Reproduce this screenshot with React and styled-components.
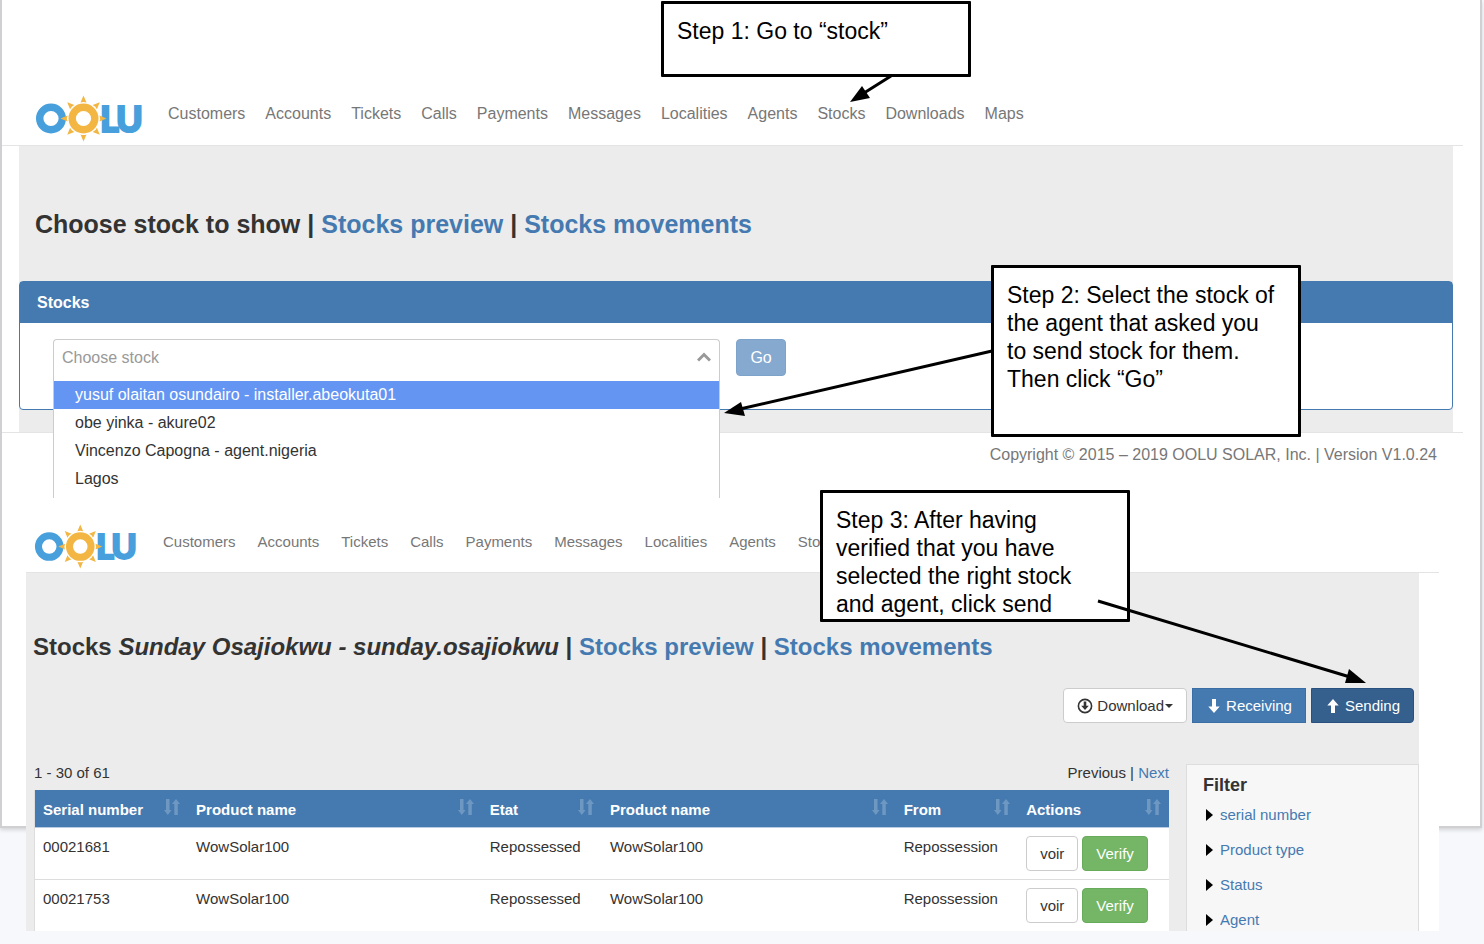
import React,{useState} from 'react';
import styled,{createGlobalStyle,css} from 'styled-components';

const GlobalStyle=createGlobalStyle`
*
{
    box-sizing:border-box;
}
body
{
    margin:0;
    background:#f7f8fb;
    color:#333;
    font-family:"Liberation Sans",Arial,sans-serif;
    font-size:15px;
    line-height:21px;
}
a
{
    color:#457ab1;
    text-decoration:none;
}
button,input
{
    font-family:inherit;
}
`;

const agentLinks=['Customers','Accounts','Tickets','Calls','Payments','Messages','Localities','Agents','Stocks'];
const links=[...agentLinks,'Downloads','Maps'];
const stocks=['yusuf olaitan osundairo - installer.abeokuta01','obe yinka - akure02','Vincenzo Capogna - agent.nigeria','Lagos'];
const columns=['Serial number','Product name','Etat','Product name','From','Actions'];
const rows=[
    {serial:'00021681',product:'WowSolar100',etat:'Repossessed',from:'Repossession'},
    {serial:'00021753',product:'WowSolar100',etat:'Repossessed',from:'Repossession'},
];
const filters=['serial number','Product type','Status','Agent'];
const rays=[0,45,90,135,180,225,270,315];

function Logo({small})
{
    return (
        <LogoSvg $small={small} viewBox="0 0 107 44" role="img" aria-label="OOLU">
            <circle cx="15" cy="21.5" r="11.3" fill="none" stroke="#479fdc" strokeWidth="7.4" />
            <LogoText x="64" y="35">L</LogoText>
            <LogoText x="80" y="35">U</LogoText>
            <circle cx="47.5" cy="21.5" r="16" fill="#fff" />
            <circle cx="47.5" cy="21.5" r="11.3" fill="none" stroke="#f3b643" strokeWidth="7.4" />
            {rays.map(angle=>(
                <path key={angle} d="M47.5 -1.5 L50.5 5.5 Q47.5 4.3 44.5 5.5 Z" fill="#f3b643" transform={`rotate(${angle} 47.5 21.5)`} />
            ))}
        </LogoSvg>
    )
}

function SortIcon()
{
    return (
        <SortSvg viewBox="0 0 16 16" aria-hidden="true">
            <path d="M2 0h3.500v11H7.500l-3.700 5L0 11h2zM10.300 16h3.500V5H16l-4-5-4 5h2.300z" />
        </SortSvg>
    )
}

function NavBar({items,small})
{
    return (
        <Nav $small={small}>
            <Logo small={small} />
            <NavList $small={small}>
                {items.map(item=><li key={item}><NavLink href="#" $small={small}>{item}</NavLink></li>)}
            </NavList>
        </Nav>
    )
}

function StockPicker()
{
    const [value, setValue] = useState("");
    return (
        <Picker>
            <PickerInput role="combobox" aria-label="Choose stock" aria-expanded="true" aria-controls="stock-list" placeholder="Choose stock" value={value} onChange={e=>setValue(e.target.value)} />
            <Caret viewBox="0 0 14 10" aria-hidden="true"><path d="M1 8.500 7 2.500l6 6" /></Caret>
            <Options id="stock-list" role="listbox">
                {stocks.map((stock,i)=>(
                    <Option key={stock} role="option" aria-selected={i===0} $active={i===0} onClick={()=>setValue(stock)}>{stock}</Option>
                ))}
            </Options>
        </Picker>
    )
}

export default function App()
{
    return (
        <Page>
            <GlobalStyle />
            <Sheet>
                <ChooseScreen>
                    <NavBar items={links} />
                    <ChooseMain>
                        <Title>Choose stock to show | <a href="#">Stocks preview</a> | <a href="#">Stocks movements</a></Title>
                        <Panel>
                            <PanelHeading>Stocks</PanelHeading>
                            <PanelBody>
                                <StockPicker />
                                <GoButton type="button">Go</GoButton>
                            </PanelBody>
                        </Panel>
                    </ChooseMain>
                    <Footer>Copyright © 2015 – 2019 OOLU SOLAR, Inc. | Version V1.0.24</Footer>
                </ChooseScreen>

                <StockScreen>
                    <NavBar items={agentLinks} small />
                    <StockMain>
                        <Title $small>Stocks <em>Sunday Osajiokwu - sunday.osajiokwu</em> | <a href="#">Stocks preview</a> | <a href="#">Stocks movements</a></Title>
                        <Toolbar>
                            <Button type="button" $kind="download">
                                <Icon viewBox="0 0 16 16" aria-hidden="true">
                                    <circle cx="8" cy="8" r="6.6" fill="none" stroke="currentColor" strokeWidth="1.6" />
                                    <path d="M6.700 3.500h2.600v4.300h2.500L8 12 4.200 7.800h2.500z" />
                                </Icon>
                                <span>Download</span>
                                <Drop viewBox="0 0 8 4" aria-hidden="true"><path d="M0 0h8L4 4z" /></Drop>
                            </Button>
                            <Button type="button" $kind="receiving">
                                <Icon viewBox="0 0 16 16" aria-hidden="true"><path d="M6 1h4v7.500h3.700L8 15 2.300 8.500H6z" /></Icon>
                                <span>Receiving</span>
                            </Button>
                            <Button type="button" $kind="sending">
                                <Icon viewBox="0 0 16 16" aria-hidden="true"><path d="M6 15h4V7.500h3.700L8 1 2.300 7.500H6z" /></Icon>
                                <span>Sending</span>
                            </Button>
                        </Toolbar>
                        <Content>
                            <div>
                                <Paging>
                                    <span>1 - 30 of 61</span>
                                    <span>Previous | <a href="#">Next</a></span>
                                </Paging>
                                <Table>
                                    <thead>
                                        <tr>
                                            {columns.map((column,i)=>(
                                                <th key={i} scope="col"><HeadCell>{column}<SortIcon /></HeadCell></th>
                                            ))}
                                        </tr>
                                    </thead>
                                    <tbody>
                                        {rows.map(row=>(
                                            <tr key={row.serial}>
                                                <td>{row.serial}</td>
                                                <td>{row.product}</td>
                                                <td>{row.etat}</td>
                                                <td>{row.product}</td>
                                                <td>{row.from}</td>
                                                <td>
                                                    <Actions>
                                                        <Button type="button" $kind="view">voir</Button>
                                                        <Button type="button" $kind="verify">Verify</Button>
                                                    </Actions>
                                                </td>
                                            </tr>
                                        ))}
                                    </tbody>
                                </Table>
                            </div>
                            <Filter>
                                <h4>Filter</h4>
                                <FilterList>
                                    {filters.map(filter=>(
                                        <li key={filter}>
                                            <a href="#"><Triangle viewBox="0 0 8 12" aria-hidden="true"><path d="M1 0l7 6-7 6z" /></Triangle>{filter}</a>
                                        </li>
                                    ))}
                                </FilterList>
                            </Filter>
                        </Content>
                    </StockMain>
                </StockScreen>
            </Sheet>

            <Callout $step={1}>Step 1: Go to “stock”</Callout>
            <Callout $step={2}>Step 2: Select the stock of the agent that asked you to send stock for them. Then click “Go”</Callout>
            <Callout $step={3}>Step 3: After having verified that you have selected the right stock and agent, click send</Callout>
            <Arrows aria-hidden="true">
                <path d="M891 76 864 93M992 351 740 409M1098 601 1350 677" />
                <polygon points="850,102 862,86 870,98" />
                <polygon points="724,413 741,402 745,416" />
                <polygon points="1366,683 1349,669 1345,683" />
            </Arrows>
        </Page>
    )
};

const Page=styled.div`
    position:relative;
    min-height:100vh;
    padding-right:2px;
    padding-bottom:116px;
`;
const Sheet=styled.div`
    border:2px solid #d0d0d2;
    border-top:none;
    background:#fff;
    box-shadow:0 2px 4px rgba(0,0,0,.15);
`;

/* nav */
const Nav=styled.nav`
    display:flex;
    align-items:flex-start;
    gap:25px;
    padding:${({$small})=>$small?'28px 8px 4px':'12px 34px 4px'};
    border-bottom:1px solid #e4e4e4;
`;
const LogoSvg=styled.svg`
    flex:none;
    width:${({$small})=>$small?'104px':'107px'};
    height:${({$small})=>$small?'42px':'44px'};
    overflow:visible;
`;
const LogoText=styled.text`
    font-family:Lato,sans-serif;
    font-size:36px;
    font-weight:900;
    fill:#479fdc;
    stroke:#479fdc;
    stroke-width:2;
`;
const NavList=styled.ul`
    display:flex;
    gap:${({$small})=>$small?'22px':'20px'};
    margin:0;
    padding:${({$small})=>$small?'5px':'6px'} 0 0;
    list-style:none;
`;
const NavLink=styled.a`
    color:#777;
    font-size:${({$small})=>$small?'15px':'16px'};
`;

/* first screen */
const ChooseScreen=styled.section`
    margin-right:17px;
    padding-top:85px;
    font-size:16px;
`;
const ChooseMain=styled.main`
    margin:0 10px 0 17px;
    padding:64px 0 22px;
    background:#ececec;
`;
const Title=styled.h3`
    margin:0;
    padding:0 ${({$small})=>$small?'7px':'16px'};
    font-size:${({$small})=>$small?'24px':'25px'};
    line-height:28px;
`;
const Panel=styled.div`
    margin-top:43px;
    border:1px solid #457ab1;
    border-radius:4px;
    background:#fff;
`;
const PanelHeading=styled.div`
    padding:10px 17px;
    background:#457ab1;
    color:#fff;
    font-weight:bold;
`;
const PanelBody=styled.div`
    display:flex;
    gap:16px;
    padding:16px 37px 33px 33px;
`;
const Picker=styled.div`
    position:relative;
    flex:0 1 49%;
`;
const PickerInput=styled.input`
    display:block;
    width:100%;
    height:37px;
    padding:0 8px;
    border:1px solid #ccc;
    border-bottom:none;
    border-radius:4px 4px 0 0;
    outline:none;
    color:#333;
    font-size:16px;
    &::placeholder
    {
        color:#999;
    }
`;
const Caret=styled.svg`
    position:absolute;
    top:13px;
    right:9px;
    width:14px;
    height:10px;
    fill:none;
    stroke:#999;
    stroke-width:3;
`;
const Options=styled.ul`
    position:absolute;
    top:37px;
    left:0;
    right:0;
    margin:0;
    padding:5px 0;
    border:1px solid #ccc;
    border-width:0 1px;
    background:#fff;
    list-style:none;
`;
const Option=styled.li`
    padding:0 21px;
    line-height:28px;
    cursor:pointer;
    ${({$active})=>$active&&css`
        background:#6495f3;
        color:#fff;
    `}
`;
const GoButton=styled.button`
    height:37px;
    padding:0 13px;
    border:1px solid #7da3ca;
    border-radius:4px;
    background:#86a9cf;
    color:#fff;
    font-size:16px;
    cursor:pointer;
`;
const Footer=styled.footer`
    padding:11px 26px 33px;
    border-top:1px solid #e4e4e4;
    color:#777;
    text-align:right;
`;

/* second screen, it runs past the bottom of the sheet */
const StockScreen=styled.section`
    position:relative;
    margin:0 41px -105px 24px;
    background:#fff;
`;
const StockMain=styled.main`
    margin-right:20px;
    padding-top:60px;
    background:#ececec;
`;
const Toolbar=styled.div`
    display:flex;
    justify-content:flex-end;
    gap:5px;
    padding:27px 5px 41px;
`;
const kinds={
    download:css`
        border-color:#ccc;
        border-radius:4px;
    `,
    receiving:css`
        border-color:#3a6ea5;
        background:#457ab1;
        color:#fff;
    `,
    sending:css`
        border-color:#2a5080;
        border-radius:0 4px 4px 0;
        background:#355f8d;
        color:#fff;
    `,
    view:css`
        border-color:#ccc;
        border-radius:4px;
    `,
    verify:css`
        border-color:#68ab5b;
        border-radius:4px;
        background:#74b566;
        color:#fff;
    `,
};
const Button=styled.button`
    display:flex;
    align-items:center;
    gap:4px;
    height:35px;
    padding:0 13px;
    border:1px solid;
    background:#fff;
    color:#333;
    font-size:15px;
    cursor:pointer;
    ${({$kind})=>kinds[$kind]}
`;
const Icon=styled.svg`
    width:16px;
    height:16px;
    fill:currentColor;
`;
const Drop=styled.svg`
    width:8px;
    height:4px;
    margin-left:-3px;
    fill:currentColor;
`;
const Content=styled.div`
    display:grid;
    grid-template-columns:1fr 233px;
    gap:17px;
    padding-left:8px;
`;
const Paging=styled.div`
    display:flex;
    justify-content:space-between;
    padding-bottom:8px;
    line-height:18px;
`;
const Table=styled.table`
    width:100%;
    table-layout:fixed;
    border-spacing:0;
    border-left:1px solid #ddd;
    background:#fff;
    th
    {
        padding:9px 8px 7px;
        background:#457ab1;
        color:#fff;
        text-align:left;
    }
    th:nth-child(1)
    {
        width:13.5%;
    }
    th:nth-child(2),th:nth-child(4)
    {
        width:25.9%;
    }
    th:nth-child(3)
    {
        width:10.6%;
    }
    th:nth-child(5)
    {
        width:10.8%;
    }
    td
    {
        padding:8px;
        border-top:1px solid #ddd;
        vertical-align:top;
    }
    tbody tr:first-child td
    {
        border-top-color:#b9cbe0;
    }
`;
const HeadCell=styled.div`
    display:flex;
    justify-content:space-between;
    white-space:nowrap;
`;
const SortSvg=styled.svg`
    width:16px;
    height:16px;
    fill:#fff;
    opacity:.22;
`;
const Actions=styled.div`
    display:flex;
    gap:4px;
`;
const Filter=styled.aside`
    padding:10px 16px 0;
    border:1px solid #ddd;
    border-bottom:none;
    background:#f7f7f7;
    h4
    {
        margin:0 0 8px;
        font-size:18px;
    }
`;
const FilterList=styled.ul`
    display:grid;
    gap:14px;
    margin:0;
    padding:0;
    list-style:none;
    a
    {
        display:flex;
        align-items:center;
        gap:7px;
        padding-left:2px;
    }
`;
const Triangle=styled.svg`
    width:8px;
    height:12px;
    fill:#000;
`;

/* notes laid over both screens */
const places={
    1:css`top:1px;left:661px;height:76px;`,
    2:css`top:265px;left:991px;height:172px;`,
    3:css`top:490px;left:820px;height:132px;`,
};
const Callout=styled.div`
    position:absolute;
    width:310px;
    padding:13px 20px 0 13px;
    border:3px solid #000;
    border-radius:1px;
    background:#fff;
    color:#000;
    font-size:23px;
    line-height:28px;
    ${({$step})=>places[$step]}
`;
const Arrows=styled.svg`
    position:absolute;
    top:0;
    left:0;
    width:100%;
    height:100%;
    pointer-events:none;
    path
    {
        fill:none;
        stroke:#000;
        stroke-width:3;
    }
`;
